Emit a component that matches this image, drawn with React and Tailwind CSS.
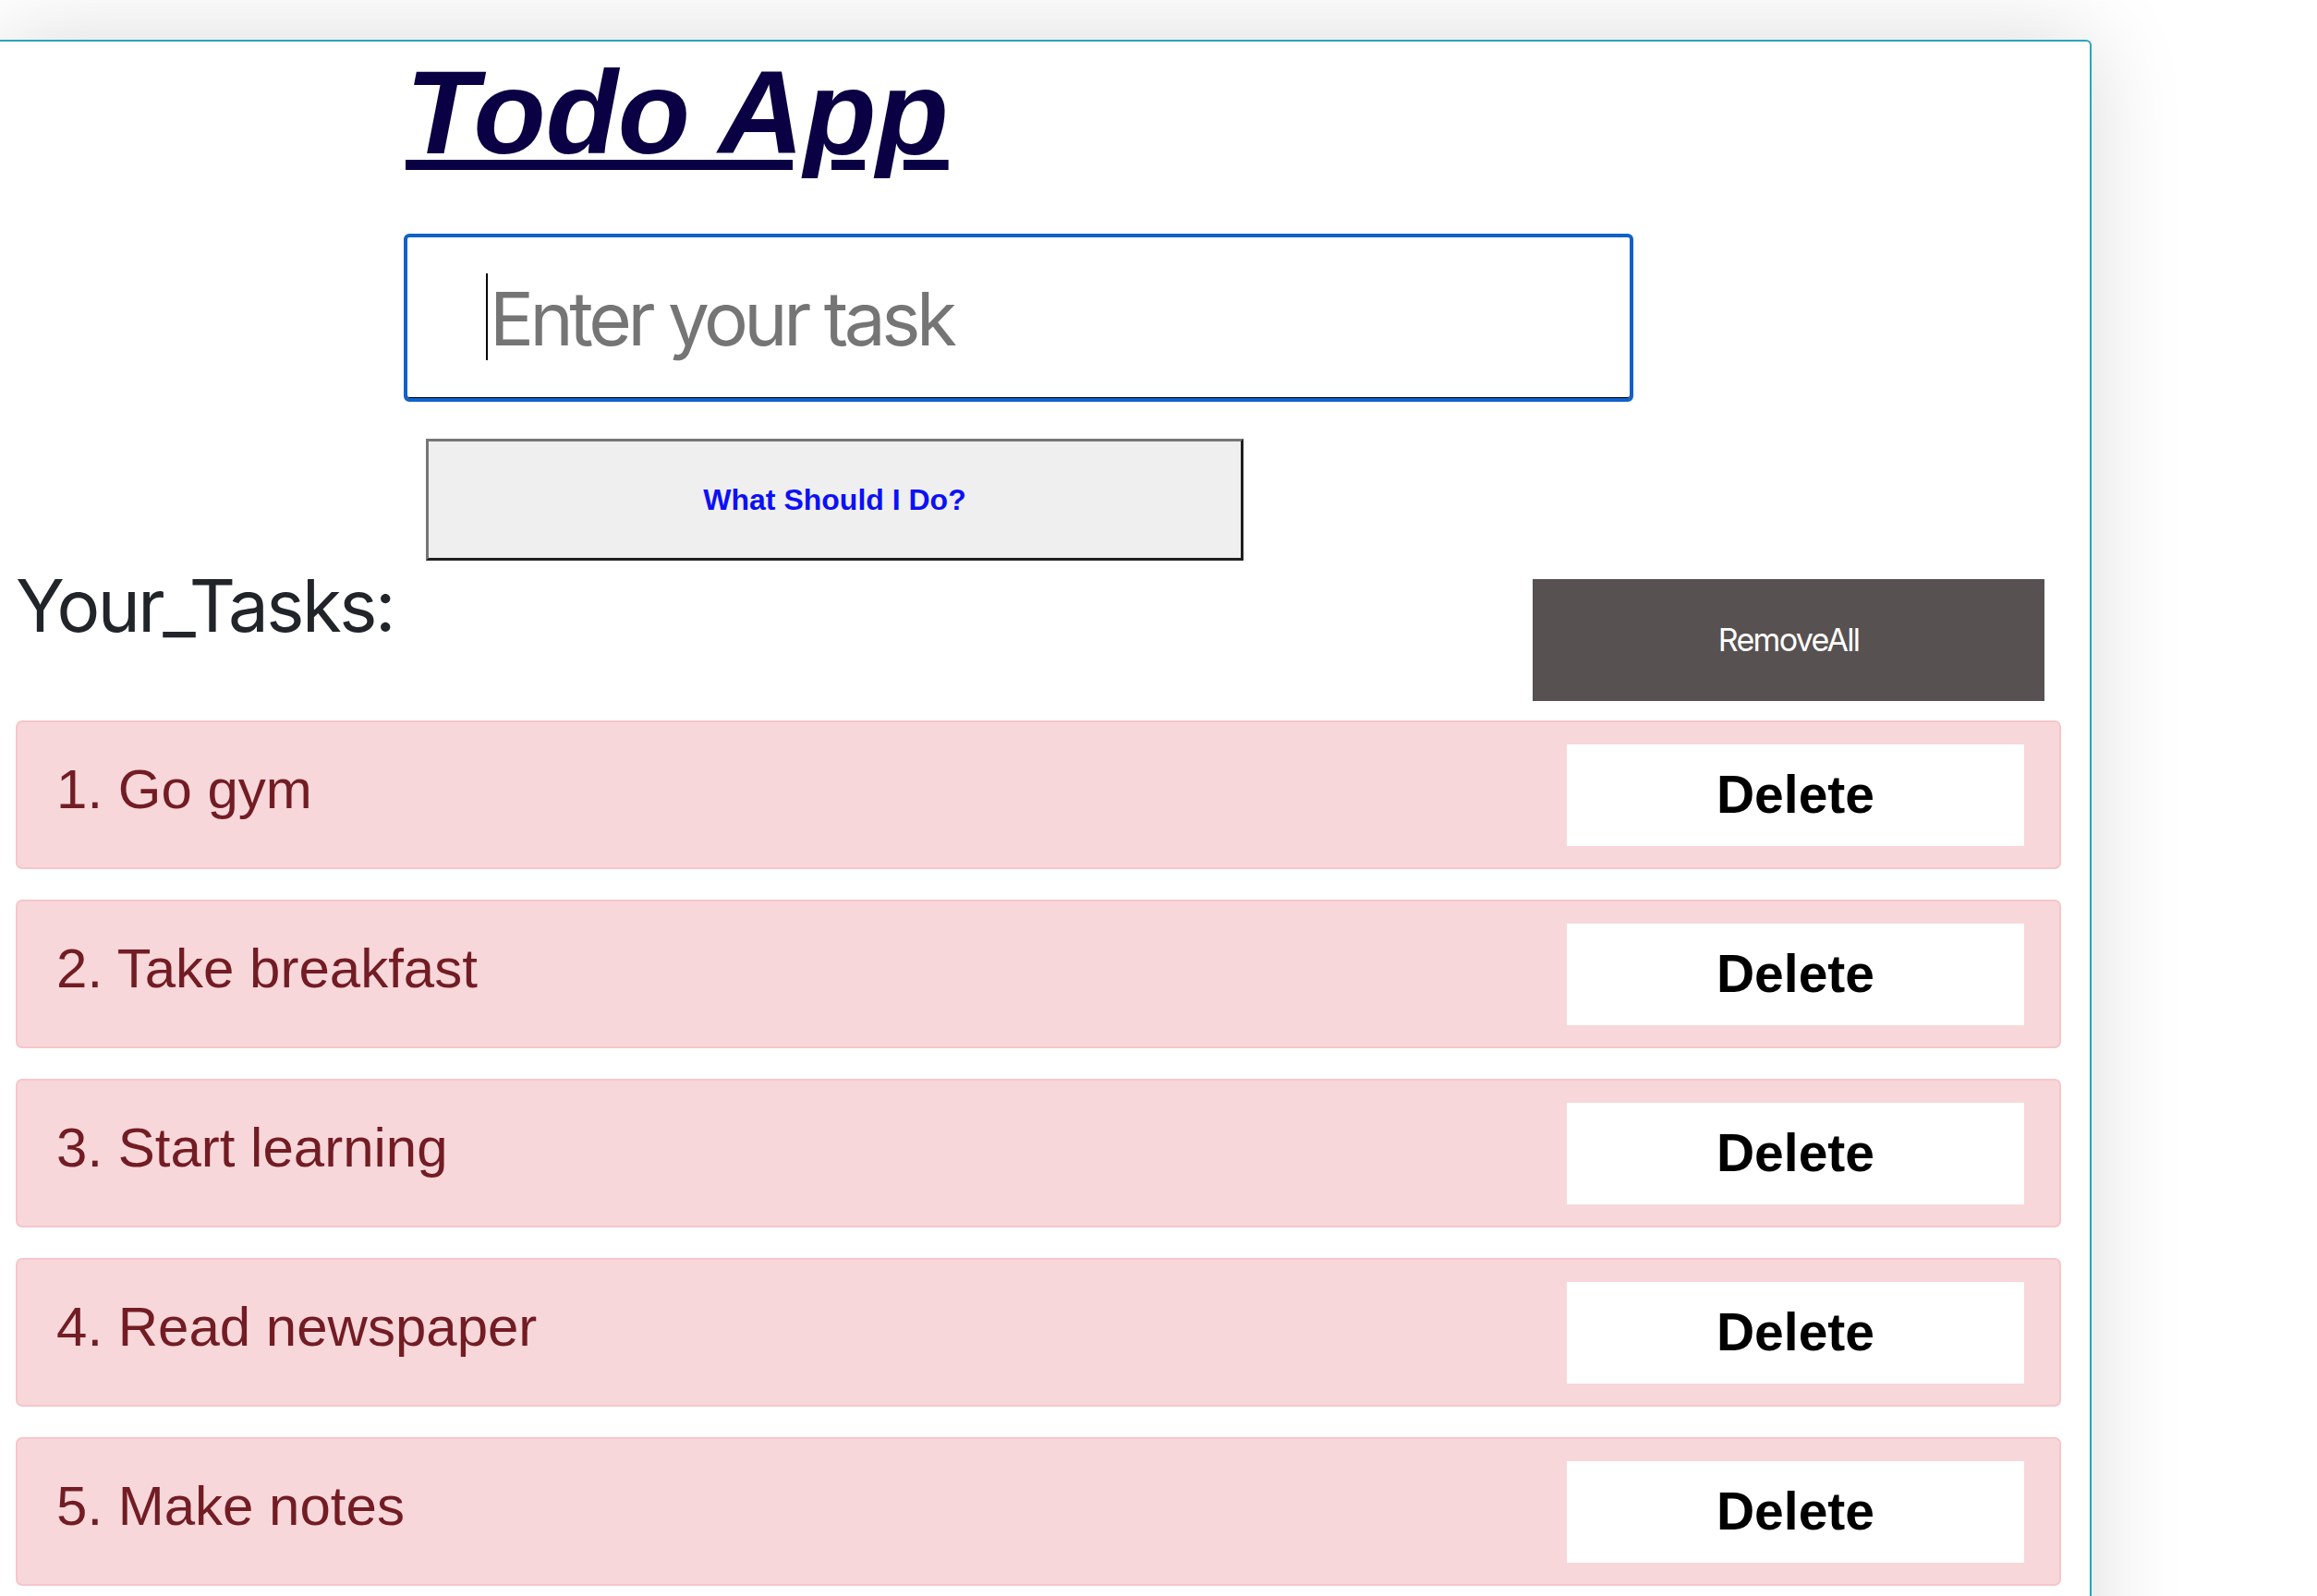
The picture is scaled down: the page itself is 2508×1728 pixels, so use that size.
import React from 'react';

const tasks = ['Go gym', 'Take breakfast', 'Start learning', 'Read newspaper', 'Make notes'];

const arial = "font-['Liberation_Sans',Arial,sans-serif]";
const inter = "font-['Inter','Roboto',sans-serif]";

const TaskItem = ({ index, text }) => (
  <div className="flex items-center justify-between h-[161px] pl-[42px] pr-[38px] bg-[#f8d7da] border-2 border-[#f5c6cb] rounded-[7px]">
    <span className={`${arial} text-[60px] leading-none text-[#721c24] mb-[12px]`}>
      {index}. {text}
    </span>
    <button className={`${arial} w-[495px] h-[110px] bg-white text-black text-[57px] font-bold leading-none`}>
      Delete
    </button>
  </div>
);

export default function App() {
  return (
    <div className="h-[1728px] overflow-hidden bg-white">
      <div className="mt-[43px] w-[2264px] min-h-[1800px] bg-white border-t-2 border-r-2 border-[#2aa5bc] rounded-tr-[6px] shadow-[0_0_100px_rgba(0,0,0,0.15)] pt-[13px]">
        <div className="flex flex-col items-start">
          <h1 className={`${arial} ml-[439px] text-[128px] leading-none font-bold italic text-[#0a0044] underline decoration-[11px] underline-offset-[7px]`}>
            Todo App
          </h1>

          <div className="relative ml-[437px] mt-[67px]">
            <input
              type="text"
              placeholder="Enter your task"
              className={`${inter} w-[1331px] h-[182px] pl-[89px] pr-6 text-[80px] tracking-[-4.5px] text-black placeholder:text-[#757575] border-4 border-[#1062c8] rounded-[6px] shadow-[inset_0_-1px_0_#000] outline-none`}
            />
            <span className="absolute left-[89px] top-[43px] w-[2px] h-[94px] bg-black" />
          </div>

          <button className={`${arial} ml-[461px] mt-[40px] w-[885px] h-[132px] bg-[#efefef] border-[3px] border-t-[#767676] border-l-[#767676] border-b-[#202020] border-r-[#202020] text-[32px] font-bold text-[#0c10f5] leading-none`}>
            What Should I Do?
          </button>
        </div>

        <div className="flex items-start justify-between mt-[10px] pl-[17px] pr-[49px]">
          <h2 className={`${inter} text-[78px] leading-none tracking-[-2.5px] text-[#212529]`}>Your_Tasks:</h2>
          <button className={`${inter} mt-[10px] w-[554px] h-[132px] bg-[#575151] text-white text-[34px] tracking-[-1.7px] leading-none`}>
            RemoveAll
          </button>
        </div>

        <div className="mt-[21px] ml-[17px] w-[2214px] flex flex-col gap-[33px]">
          {tasks.map((t, i) => (
            <TaskItem key={i} index={i + 1} text={t} />
          ))}
        </div>
      </div>
    </div>
  );
}
